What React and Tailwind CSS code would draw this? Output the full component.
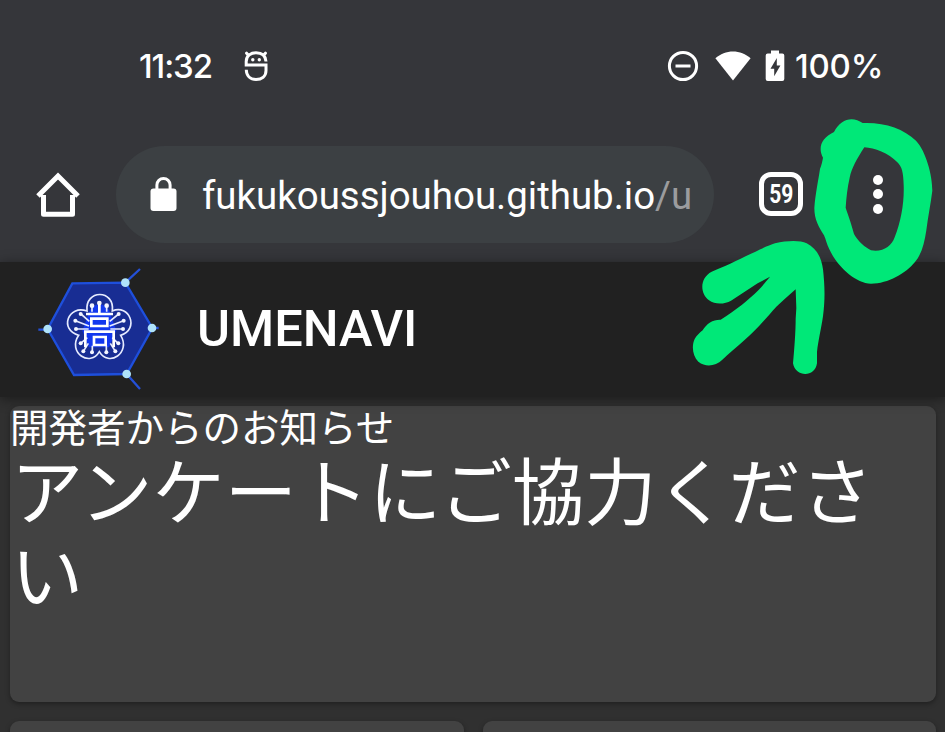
import React from "react";

function StatusBar() {
  return (
    <div className="flex h-[132px] items-center pl-[139px] pr-[62px]">
      <span className="w-[74px] whitespace-nowrap pt-px font-['Inter'] text-[33px] font-medium leading-none tracking-[-1.1px]">11:32</span>
      <svg className="ml-[31px] h-8 w-6" viewBox="0 0 24 32" fill="none" stroke="white" strokeWidth="3">
        <path d="M22 11.500C21.500 5 17 2.800 12 2.800S2.200 5.500 2.200 11.500v3.600H22v5.400c0 6-4.500 9-10 9s-9.700-3.500-9.700-9.700" />
        <path d="m4 4.800-1.400-1.600M20 4.800l1.400-1.600" strokeLinecap="round" />
        <circle cx="8.800" cy="9.800" r="1.700" fill="white" stroke="none" />
        <circle cx="15.300" cy="9.800" r="1.700" fill="white" stroke="none" />
      </svg>
      <div className="ml-auto flex items-center">
        <svg className="h-8 w-8" viewBox="0 0 32 32" fill="none" stroke="white" strokeWidth="3">
          <circle cx="16" cy="16" r="13.6" />
          <path d="M8.5 16h15" />
        </svg>
        <svg className="ml-[16px] h-8 w-9" viewBox="0 0 36 32" fill="white">
          <path d="M.4 8.3C10-.9 26-.9 35.6 8.3L18 30.5Z" />
        </svg>
        <svg className="ml-[14px] h-8 w-5" viewBox="0 0 20 32">
          <path d="M6 .5h8v3h3.3q2 0 2 2v23.600q0 2-2 2H2.700q-2 0-2-2V5.500q0-2 2-2H6Z" fill="white" />
          <path d="M11.800 8 5.500 18.800h3.700v7.400l6.200-10.800h-3.600Z" fill="#35363a" />
        </svg>
        <span className="ml-[10px] w-[88px] whitespace-nowrap pt-px font-['Inter'] text-[33px] font-medium leading-none tracking-[-0.2px]">100%</span>
      </div>
    </div>
  );
}

function Toolbar() {
  return (
    <div className="flex h-[130px] items-start pl-[36px]">
      <svg className="mt-[40px] h-[46px] w-[44px]" viewBox="0 0 44 46" fill="none" stroke="white" strokeWidth="5" strokeLinejoin="round">
        <path d="M7.5 23v19.300h29V23" />
        <path d="M2 24 22 4l20 20" strokeLinejoin="miter" />
      </svg>
      <div className="ml-[36px] mt-[14px] flex h-[97px] w-[598px] items-center rounded-full bg-[#3c4043] pl-[34px]">
        <svg className="-mt-px h-[36px] w-[27px] shrink-0" viewBox="0 0 27 36">
          <path d="M6.900 14V9a6.600 6.600 0 0 1 13.200 0v5" fill="none" stroke="white" strokeWidth="3" />
          <rect x=".5" y="12.500" width="26" height="22.500" rx="3" fill="white" />
        </svg>
        <div className="ml-[25px] mt-[2px] whitespace-nowrap font-['Roboto'] text-[38.450px] leading-[60px]">
          fukukoussjouhou.github.io<span className="text-[#9b9c9e]">/u</span>
        </div>
      </div>
      <div className="ml-[45px] mt-[40px] flex h-[44px] w-[44px] items-center justify-center rounded-[12px] border-[5px] border-white font-['Roboto'] text-[25px] font-bold leading-none">
        <span className="scale-x-[.84]">59</span>
      </div>
      <div className="ml-[69.500px] mt-[42.500px] flex flex-col gap-[4.500px]">
        <i className="size-[10px] rounded-full bg-white" />
        <i className="size-[10px] rounded-full bg-white" />
        <i className="size-[10px] rounded-full bg-white" />
      </div>
    </div>
  );
}

function Logo() {
  return (
    <svg className="h-[140px] w-[140px]" viewBox="0 0 420 420" fill="none">
      <path d="M286 68 330 27M290 342l40 45M25 209h28M366 204h20" stroke="#2450d8" strokeWidth="7" />
      <path d="M127 70 286 68 367 204 290 342 132 345 53 207Z" fill="#182d93" stroke="#1e4fdc" strokeWidth="7" />
      <path d="M180 150q28-35 57 0l22 62-22 50h-60l-20-50Z" fill="#1238ee" />
      <g stroke="#e6ebff" strokeWidth="5">
        <path d="M171 153c-7-66 84-66 76 0 50-22 83 54 25 73 32 52-36 97-64 49-27 48-97 3-62-49-60-17-31-93 25-73Z" />
        <path d="M186 137v18M208 130v24M230 137v18M153 162l25 22M136 182l41 16M138 207h38M266 162l-27 22M281 182l-42 16M279 207h-38M152 250l20-17M264 250l-17-17M160 274l15-24M256 274l-15-24M187 277v-20M229 277v-20" />
      </g>
      <g fill="#f3f5ff">
        <circle cx="186" cy="137" r="7" /><circle cx="208" cy="129" r="7" /><circle cx="230" cy="137" r="7" />
        <circle cx="152" cy="162" r="6" /><circle cx="136" cy="182" r="6" /><circle cx="138" cy="207" r="6" />
        <circle cx="266" cy="162" r="6" /><circle cx="281" cy="182" r="6" /><circle cx="279" cy="207" r="6" />
        <circle cx="152" cy="250" r="6" /><circle cx="160" cy="274" r="6" /><circle cx="186" cy="277" r="6" />
        <circle cx="229" cy="277" r="6" /><circle cx="256" cy="274" r="6" /><circle cx="265" cy="250" r="6" />
      </g>
      <g stroke="white" strokeWidth="8">
        <path d="M168 162h81M208 132v30" />
        <path d="M184 176h48v22h-48ZM166 262v-47h85v47M192 231h35v24h-35Z" />
      </g>
      <g fill="#afe3fb">
        <circle cx="286" cy="68" r="13" /><circle cx="366" cy="204" r="13" />
        <circle cx="290" cy="342" r="13" /><circle cx="53" cy="207" r="13" />
      </g>
    </svg>
  );
}

function AppBar() {
  return (
    <header className="relative z-10 flex h-[135px] items-center bg-[#212121] pl-[30px] shadow-[0_2px_12px_rgba(0,0,0,0.45)]">
      <div className="mt-px h-[140px]"><Logo /></div>
      <h1 className="ml-[27px] font-['Roboto'] text-[50.500px] font-medium leading-none">UMENAVI</h1>
    </header>
  );
}

const cardClass = "rounded-[9px] bg-[#424242] shadow-[0_2px_5px_rgba(0,0,0,0.35)]";

function Marker() {
  return (
    <svg className="pointer-events-none absolute left-[680px] top-[110px] z-20 h-[275px] w-[265px]" viewBox="0 0 795 825" fill="#00e878">
      <path fillRule="evenodd" d="M429 143C413 113 424 84 462 66C482 25 519 18 548 39C611 36 670 55 708 92C738 124 757 195 757 242C752 284 744 318 739 361C733 401 725 432 705 456C677 490 625 521 573 521C524 520 470 466 448 418C440 403 438 389 432 376C417 350 403 331 403 294C406 251 416 206 420 177C425 163 427 155 429 143ZM553 112C530 148 515 174 509 203C502 233 499 263 497 293C503 313 512 333 522 372C536 397 555 411 573 421C608 427 634 410 644 382C663 334 673 279 671 225C670 188 666 170 652 157C625 129 584 114 553 112Z" />
      <path d="M95 485C158 461 243 413 285 400C322 391 360 390 380 400C409 416 424 440 429 478C434 524 436 566 429 619C422 665 415 690 411 726V760C405 804 346 802 339 760C343 715 347 664 347 626L349 594L347 538L314 567L289 590C260 622 226 663 197 687C171 711 146 730 127 749C107 768 78 773 55 755C38 738 34 708 44 687C49 678 60 667 68 661C80 640 100 628 122 629C170 600 205 570 235 541C248 527 260 512 270 500L233 520L153 572C134 583 105 584 87 571C59 549 59 504 95 485Z" />
    </svg>
  );
}

export default function App() {
  return (
    <div className="relative h-[732px] w-[945px] overflow-hidden bg-[#303030] text-white">
      <div className="bg-[#35363a]">
        <StatusBar />
        <Toolbar />
      </div>
      <AppBar />
      <main className="pl-[10px] pr-[9px] pt-[9px] font-['Roboto','Noto_Sans_CJK_JP',sans-serif]">
        <section className={`h-[296px] overflow-hidden ${cardClass}`}>
          <p className="whitespace-nowrap text-[38.500px] leading-[46px]">開発者からのお知らせ</p>
          <h2 className="whitespace-nowrap pl-px pt-px text-[72.200px] leading-[84px]">アンケートにご協力くださ<br />い</h2>
        </section>
        <div className="mt-[19px] grid grid-cols-2 gap-[19px]">
          <div className={`h-[60px] ${cardClass}`} />
          <div className={`h-[60px] ${cardClass}`} />
        </div>
      </main>
      <Marker />
    </div>
  );
}
